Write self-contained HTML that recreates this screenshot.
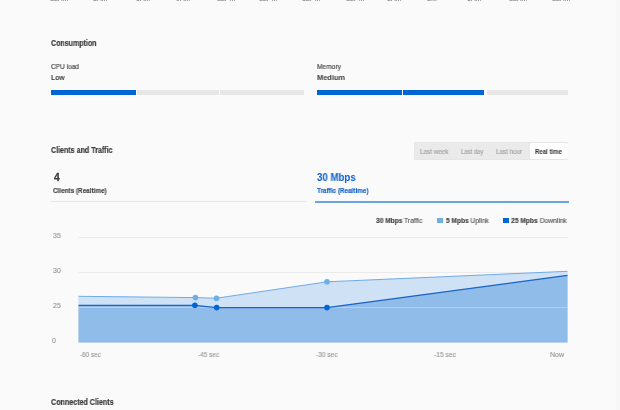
<!DOCTYPE html>
<html><head><meta charset="utf-8">
<style>
html,body{margin:0;padding:0;}
body{width:620px;height:410px;overflow:hidden;background:#fafafa;position:relative;font-family:"Liberation Sans",sans-serif;color:#3a3a3a;}
.a{position:absolute;white-space:nowrap;line-height:1;transform-origin:0 0;will-change:transform;filter:blur(0.25px);}
.h{font-size:8.5px;font-weight:bold;color:#3a3a3a;-webkit-text-stroke:0.2px #3a3a3a;}
.lbl{font-size:7px;color:#4d4d4d;-webkit-text-stroke:0.2px #4d4d4d;}
.val{font-size:8px;font-weight:bold;color:#3c3c3c;}
.bar{position:absolute;height:5px;}
.tick{font-size:7px;color:#999;-webkit-text-stroke:0.15px #999;}
.tabs{position:absolute;left:414px;top:142px;width:154px;height:18px;background:#eaeaea;border-radius:2px;box-shadow:inset 0 0 0 0.5px #e2e2e2;}
.tab{position:absolute;top:5.6px;font-size:7px;color:#a4a4a4;-webkit-text-stroke:0.15px #a4a4a4;white-space:nowrap;line-height:1;transform-origin:0 0;will-change:transform;filter:blur(0.25px);}
.leg{font-size:7px;color:#575757;-webkit-text-stroke:0.15px #575757;}
.leg b{color:#3a3a3a;}
</style></head><body>
<!-- top cut-off axis labels -->
<div class="a tick" style="left:50.3px;top:-4.8px;color:#808080;">12AM</div>
<div class="a tick" style="left:92.9px;top:-4.8px;color:#808080;">3AM</div>
<div class="a tick" style="left:135.5px;top:-4.8px;color:#808080;">6AM</div>
<div class="a tick" style="left:175.5px;top:-4.8px;color:#808080;">9AM</div>
<div class="a tick" style="left:216.8px;top:-4.8px;color:#808080;">12PM</div>
<div class="a tick" style="left:259.4px;top:-4.8px;color:#808080;">12PM</div>
<div class="a tick" style="left:302.0px;top:-4.8px;color:#808080;">12PM</div>
<div class="a tick" style="left:345.8px;top:-4.8px;color:#808080;">12PM</div>
<div class="a tick" style="left:387.0px;top:-4.8px;color:#808080;">3AM</div>
<div class="a tick" style="left:427.0px;top:-4.8px;color:#808080;">3M</div>
<div class="a tick" style="left:467.0px;top:-4.8px;color:#808080;">6AM</div>
<div class="a tick" style="left:508.7px;top:-4.8px;color:#808080;">12AM</div>
<div class="a tick" style="left:552.0px;top:-4.8px;color:#808080;">12AM</div>

<div class="a h" style="left:51px;top:38.6px;transform:scaleX(0.83);">Consumption</div>

<div class="a lbl" style="left:51px;top:63px;transform:scaleX(0.933);">CPU load</div>
<div class="a val" style="left:51px;top:74px;transform:scaleX(0.850);">Low</div>
<div class="bar" style="left:51px;top:90px;width:84.5px;background:#0066d4;"></div>
<div class="bar" style="left:137px;top:90px;width:82px;background:#e7e7e7;"></div>
<div class="bar" style="left:220px;top:90px;width:84px;background:#e7e7e7;"></div>

<div class="a lbl" style="left:317px;top:63px;transform:scaleX(0.946);">Memory</div>
<div class="a val" style="left:317px;top:74px;transform:scaleX(0.930);">Medium</div>
<div class="bar" style="left:317px;top:90px;width:85px;background:#0066d4;"></div>
<div class="bar" style="left:403px;top:90px;width:81px;background:#0066d4;"></div>
<div class="bar" style="left:486.8px;top:90px;width:81.7px;background:#e7e7e7;"></div>

<div class="a h" style="left:51px;top:146.4px;transform:scaleX(0.834);">Clients and Traffic</div>

<div class="tabs">
  <div class="tab" style="left:6px;transform:scaleX(0.900);">Last week</div>
  <div class="tab" style="left:47px;transform:scaleX(0.845);">Last day</div>
  <div class="tab" style="left:82px;transform:scaleX(0.900);">Last hour</div>
  <div style="position:absolute;left:116px;top:1px;width:37.5px;height:15.6px;background:#fff;border-radius:1.5px;"></div>
  <div class="tab" style="left:121px;color:#333;font-weight:bold;-webkit-text-stroke:0;transform:scaleX(0.865);">Real time</div>
</div>

<div class="a" style="left:53.6px;top:173.2px;font-size:10.3px;font-weight:bold;color:#3a3a3a;-webkit-text-stroke:0.3px #3a3a3a;">4</div>
<div class="a" style="left:53px;top:187px;font-size:7px;font-weight:bold;color:#444;-webkit-text-stroke:0.15px #444;transform:scaleX(0.907);">Clients (Realtime)</div>
<div style="position:absolute;left:51px;top:201px;width:255px;height:1px;background:#e6e6e6;"></div>

<div class="a" style="left:317px;top:172.8px;font-size:10px;font-weight:bold;color:#0a5fc9;transform:scaleX(0.967);">30 Mbps</div>
<div class="a" style="left:317px;top:187px;font-size:7px;font-weight:bold;color:#1563c8;-webkit-text-stroke:0.15px #1563c8;transform:scaleX(0.907);">Traffic (Realtime)</div>
<div style="position:absolute;left:315px;top:201px;width:254px;height:2px;background:#6aa3e0;"></div>

<div class="a leg" style="left:376px;top:217px;transform:scaleX(0.945);"><b>30 Mbps</b> Traffic</div>
<div style="position:absolute;left:437px;top:218px;width:5.5px;height:5.3px;background:#6cb0ea;"></div>
<div class="a leg" style="left:446px;top:217px;transform:scaleX(0.94);"><b>5 Mpbs</b> Uplink</div>
<div style="position:absolute;left:503.3px;top:218px;width:5.5px;height:5.3px;background:#0066d4;"></div>
<div class="a leg" style="left:511px;top:217px;transform:scaleX(0.956);"><b>25 Mpbs</b> Downlink</div>

<!-- chart -->
<div class="a tick" style="left:53px;top:232px;">35</div>
<div class="a tick" style="left:53px;top:267px;">30</div>
<div class="a tick" style="left:53px;top:302px;">25</div>
<div class="a tick" style="left:52px;top:337px;">0</div>

<svg style="position:absolute;left:0;top:0;" width="620" height="410" viewBox="0 0 620 410">
  <line x1="78.5" y1="237.5" x2="568" y2="237.5" stroke="#ebebeb" stroke-width="1"/>
  <line x1="78.5" y1="272.5" x2="568" y2="272.5" stroke="#ebebeb" stroke-width="1"/>
  <polygon points="78.5,296.3 195.4,297.6 216.5,298.2 327,281.8 567.5,271.3 567.5,342.5 78.5,342.5" fill="#cfe1f5"/>
  <polygon points="78.5,305.4 194.9,305.4 216.7,307.6 327,307.6 567.5,275.4 567.5,342.5 78.5,342.5" fill="#90bcea"/>
  <line x1="78.5" y1="307.5" x2="567.5" y2="307.5" stroke="rgba(255,255,255,0.3)" stroke-width="1"/>
  <polyline points="78.5,296.3 195.4,297.6 216.5,298.2 327,281.8 567.5,271.3" fill="none" stroke="#6fabe6" stroke-width="1"/>
  <polyline points="78.5,305.4 194.9,305.4 216.7,307.6 327,307.6 567.5,275.4" fill="none" stroke="#1a62c6" stroke-width="1.1"/>
  <circle cx="195.4" cy="297.6" r="2.8" fill="#6aaeea"/>
  <circle cx="216.5" cy="298.2" r="2.8" fill="#6aaeea"/>
  <circle cx="327" cy="281.8" r="2.8" fill="#6aaeea"/>
  <circle cx="194.9" cy="305.2" r="2.8" fill="#0066d4"/>
  <circle cx="216.7" cy="307.6" r="2.8" fill="#0066d4"/>
  <circle cx="327" cy="307.6" r="2.8" fill="#0066d4"/>
</svg>

<div class="a tick" style="left:80px;top:351px;transform:scaleX(0.904);">-60 sec</div>
<div class="a tick" style="left:198px;top:351px;transform:scaleX(0.920);">-45 sec</div>
<div class="a tick" style="left:316px;top:351px;transform:scaleX(0.940);">-30 sec</div>
<div class="a tick" style="left:434px;top:351px;transform:scaleX(0.960);">-15 sec</div>
<div class="a tick" style="left:550px;top:351px;">Now</div>

<div class="a h" style="left:51px;top:397.6px;transform:scaleX(0.838);">Connected Clients</div>
<div style="position:absolute;left:616px;top:0;width:4px;height:410px;background:#f7f7f7;"></div>
</body></html>
